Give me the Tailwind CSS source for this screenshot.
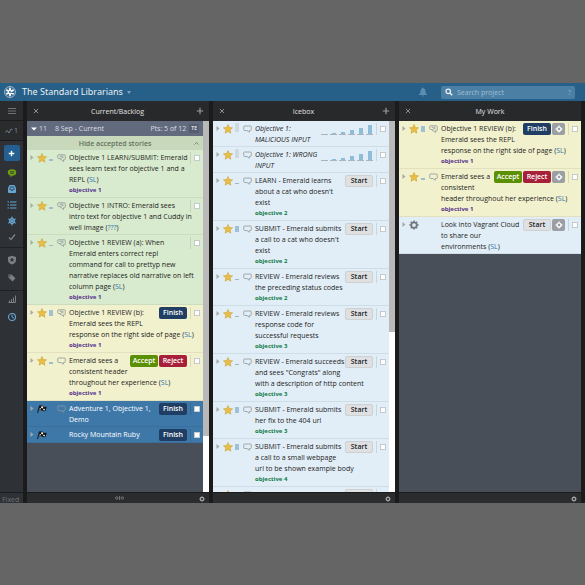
<!DOCTYPE html>
<html lang="en">
<head>
<meta charset="utf-8">
<meta name="viewport" content="width=device-width, initial-scale=1">
<title>The Standard Librarians</title>
<script src="https://cdn.jsdelivr.net/npm/@tailwindcss/browser@4"></script>
</head>
<body class="bg-[#666565] font-['Open_Sans','Noto_Sans',sans-serif] text-[7px] leading-[11px] text-[#1c1c1c]">
<svg class="hidden" aria-hidden="true">
  <symbol id="i-star" viewBox="0 0 20 20"><path d="M10 1l2.700 6 6.500.6-4.900 4.300 1.500 6.500L10 15l-5.800 3.400 1.500-6.500L.8 7.600 7.300 7z" fill="#e8bf45" stroke="#cda23a" stroke-width="1.200" stroke-linejoin="round"/></symbol>
  <symbol id="i-arrow" viewBox="0 0 8 10"><path d="M1 0l6 5-6 5z" fill="currentColor"/></symbol>
  <symbol id="i-comment" viewBox="0 0 18 16"><path d="M3 2h12q1.500 0 1.500 1.500v6q0 1.500-1.500 1.500h-2.500v3.500L8 11H3q-1.500 0-1.500-1.500v-6Q1.500 2 3 2z" fill="none" stroke="currentColor" stroke-width="1.600"/></symbol>
  <symbol id="i-comments" viewBox="0 0 18 16"><path d="M3 1.500h12q1.500 0 1.500 1.500v7q0 1.500-1.500 1.500h-2V15l-4-3.500H7V9H3Q1.500 9 1.500 7.500V3Q1.500 1.500 3 1.500zM5 4.500h8M8 7.500h5" fill="none" stroke="currentColor" stroke-width="1.600"/></symbol>
  <symbol id="i-gear" viewBox="0 0 20 20"><circle cx="10" cy="10" r="5.500" fill="none" stroke="currentColor" stroke-width="3.500"/><path d="M10 .8v3M10 16.200v3M.8 10h3M16.200 10h3M3.500 3.500l2 2M14.500 14.500l2 2M16.500 3.500l-2 2M5.500 14.500l-2 2" stroke="currentColor" stroke-width="3"/></symbol>
  <symbol id="i-flag" viewBox="0 0 20 18"><path d="M5 2.500Q9 0 12 3t7.500 1L17 13q-4 1.500-7-1t-7 0z" fill="#111"/><path d="M5 2L1 17" stroke="#111" stroke-width="1.800"/><path d="M9 3l3.500 1.500-.8 3.500-3.500-1.500zM13 8.500l3 .3-.8 3-3-.6zM5.500 7.500l2.300-.5-.8 2.800-2.300.5z" fill="#fff"/></symbol>
  <symbol id="i-plus" viewBox="0 0 10 10"><path d="M5 1v8M1 5h8" stroke="currentColor" stroke-width="1.500"/></symbol>
  <symbol id="i-x" viewBox="0 0 10 10"><path d="M1.500 1.500l7 7M8.500 1.500l-7 7" stroke="currentColor" stroke-width="1.500"/></symbol>
  <symbol id="i-move" viewBox="0 0 20 20"><circle cx="10" cy="10" r="5" fill="none" stroke="#fff" stroke-width="3"/><path d="M10 1v5M10 14v5M1 10h5M14 10h5" stroke="#fff" stroke-width="3"/></symbol>
</svg>

<div class="flex h-screen flex-col pt-[83px] pb-[82px]">
  <header class="flex h-[18px] shrink-0 items-center bg-[#265f88] pr-2.5 pl-1">
    <svg class="size-3 shrink-0" viewBox="0 0 24 24" aria-hidden="true"><circle cx="12" cy="12" r="11" fill="#3d7098" stroke="#b9cbd9" stroke-width="1.500"/><path d="M12 5v14M5.900 8.500l12.200 7M18.100 8.500l-12.200 7" stroke="#fff" stroke-width="3.600" stroke-linecap="round"/><circle cx="12" cy="12" r="2" fill="#265f88"/></svg>
    <h1 class="ml-1.5 font-['Noto_Sans',sans-serif] text-[9px] leading-[14px] whitespace-nowrap text-[#e9eff4]">The Standard Librarians</h1>
    <svg class="ml-1 h-[3px] w-1 shrink-0" viewBox="0 0 8 6" aria-hidden="true"><path d="M0 0h8L4 6z" fill="#7fa3be"/></svg>
    <svg class="mr-3.5 ml-auto h-2.5 w-2 shrink-0" viewBox="0 0 16 20" aria-hidden="true"><path d="M8 1q1.500 0 1.500 1.600Q13 4 13 8.500q0 5 3 6.500v1H0v-1q3-1.500 3-6.500Q3 4 6.500 2.600 6.500 1 8 1zM6 17h4q0 2-2 2t-2-2z" fill="#5d8dae"/></svg>
    <div class="flex h-[13px] w-[134px] items-center rounded-[2px] bg-[#4b7fa4] px-1">
      <svg class="size-2 shrink-0" viewBox="0 0 16 16" aria-hidden="true"><circle cx="6.500" cy="6.500" r="4.500" fill="none" stroke="#e6eef4" stroke-width="2.500"/><path d="M10 10l4.500 4.500" stroke="#e6eef4" stroke-width="3"/></svg>
      <input type="text" aria-label="Search project" placeholder="Search project" class="ml-1 h-3 min-w-0 flex-1 bg-transparent font-['Noto_Sans',sans-serif] text-[7px] text-white outline-none placeholder:text-[#9dbcd1]">
      <span class="text-[#8db0c8]">?</span>
    </div>
  </header>

  <div class="flex min-h-0 flex-1 bg-[#1b1b1c]">
    <nav class="flex w-[23px] shrink-0 flex-col items-center bg-[#2e3136] text-[#8b8e91]" aria-label="Tools">
      <button class="flex h-5 w-full items-center justify-center border-b border-[#1b1b1c] bg-[#2a2b2d]" aria-label="Menu"><svg class="h-1.5 w-2" viewBox="0 0 16 12"><path d="M0 1h16M0 6h16M0 11h16" stroke="#77797b" stroke-width="1.800"/></svg></button>
      <button class="flex h-5 w-full items-center justify-center gap-px border-b border-[#1b1b1c] bg-[#2a2b2d]" aria-label="Velocity"><svg class="h-1.5 w-2" viewBox="0 0 16 12"><path d="M1 9l3-4 4 5 4-8 3 1" fill="none" stroke="currentColor" stroke-width="1.600"/></svg>1</button>
      <button class="mt-1 flex size-4 items-center justify-center rounded-[2px] bg-[#235f91] text-white" aria-label="Add story"><svg class="size-[7px]" viewBox="0 0 10 10"><path d="M5 1v8M1 5h8" stroke="currentColor" stroke-width="2"/></svg></button>
      <div class="mt-1 flex w-full flex-col items-center border-b border-[#1f2124] text-[#68a7d4]">
        <button class="flex h-4 items-center" aria-label="Comments"><svg class="size-2.5" viewBox="0 0 20 20"><path d="M10 2.500q8.500 0 8.500 6.500T10 15.500L7 19l-.5-4Q1.500 13.500 1.500 9 1.500 2.500 10 2.500z" fill="#6d9f13"/><path d="M6 7.500h8M6 10.500h8" stroke="#2e3136" stroke-width="1.500"/></svg></button>
        <button class="flex h-4 items-center" aria-label="Inbox"><svg class="size-2.5" viewBox="0 0 20 20"><path d="M5 2h10l3 6v8q0 2-2 2H4q-2 0-2-2V8z" fill="currentColor"/><path d="M5.500 6h9M4 10h3.500l1.500 3h2l1.500-3H16" fill="none" stroke="#2e3136" stroke-width="1.800"/></svg></button>
        <button class="flex h-4 items-center" aria-label="List"><svg class="h-2 w-2.5" viewBox="0 0 20 16"><path d="M1 2h3M6 2h13M1 8h3M6 8h13M1 14h3M6 14h13" stroke="currentColor" stroke-width="2.400"/></svg></button>
        <button class="flex h-4 items-center" aria-label="Icebox"><svg class="size-2.5" viewBox="0 0 20 20"><path d="M10 2v16M3 6l14 8M17 6L3 14" stroke="currentColor" stroke-width="2" stroke-linecap="round"/><path d="M10 4.500l4.800 2.800v5.400L10 15.500l-4.800-2.800V7.300z" fill="none" stroke="currentColor" stroke-width="2.200"/></svg></button>
        <button class="mb-0.5 flex h-4 items-center text-[#7d7f82]" aria-label="Done"><svg class="h-2 w-2" viewBox="0 0 16 16"><path d="M2 9l4 4 8-10" fill="none" stroke="currentColor" stroke-width="2.800"/></svg></button>
      </div>
      <div class="flex w-full flex-col items-center gap-0.5 border-b border-[#1f2124] py-1 text-[#7d7f82]">
        <button class="flex h-4 items-center" aria-label="Epics"><svg class="size-2.5" viewBox="0 0 20 20"><path d="M10 1.500L18 4v6q0 6-8 9-8-3-8-9V4z" fill="currentColor"/><path d="M10 5l1.500 3h3l-2.300 2.200.8 3.300-3-1.700-3 1.700.8-3.300L5.500 8h3z" fill="#2e3136"/></svg></button>
        <button class="flex h-4 items-center" aria-label="Labels"><svg class="size-2" viewBox="0 0 16 16"><path d="M1 1h6l8 7.500L9 15 1 7z" fill="currentColor"/><circle cx="4" cy="4" r="1.300" fill="#2e3136"/></svg></button>
      </div>
      <div class="flex w-full flex-col items-center text-[#7d7f82]">
        <button class="flex h-4 items-center" aria-label="Charts"><svg class="size-2" viewBox="0 0 16 16"><path d="M1 15h14M3 15v-4M7 15V8M11 15V5M15 15V1" stroke="currentColor" stroke-width="2"/></svg></button>
        <button class="mt-0.5 flex h-4 items-center text-[#68a7d4]" aria-label="History"><svg class="size-2.5" viewBox="0 0 20 20"><circle cx="10" cy="10" r="7" fill="none" stroke="currentColor" stroke-width="2.200"/><path d="M10 5.500V10l4 2" fill="none" stroke="currentColor" stroke-width="2"/></svg></button>
      </div>
      <div class="mt-auto h-[11px] w-full overflow-hidden border-t border-[#1b1b1c] pl-0.5 leading-[14px] text-[#6f7174]">Fixed</div>
    </nav>
    <main id="board" class="flex min-w-0 flex-1 gap-1 pr-1 pl-1"></main>
  </div>
</div>

<script>
const SL = '(<a href="#" class="text-[#2d76b0]">SL</a>)';
const tones = {
  green: 'border-[#cbdcbf] bg-[#d9ebce] text-[#1c1c1c]',
  yellow: 'border-[#e2e0bd] bg-[#f2f1ce] text-[#1c1c1c]',
  ice: 'border-[#cfdde7] bg-[#e2eef7] text-[#1c1c1c]',
  done: 'border-[#3a6f9c] bg-[#3e78a9] text-white'
};
const buttons = {
  Finish: 'bg-[#203e64] text-white',
  Accept: 'bg-[#5b9004] text-white',
  Reject: 'bg-[#a71f39] text-white',
  Start: 'border border-[#cfd0d2] bg-[#dfe0e2] text-[#222]'
};
const points = {
  none: '',
  unset: '<span class="h-[9px] w-full bg-[#cfd9e1]"></span>',
  1: '<span class="h-[2px] w-full bg-[#9dbdcf]"></span>',
  0: '<span class="h-px w-full bg-[#a3b8ba]"></span>',
  3: '<span class="h-[6px] w-full bg-[#a0c0d8]"></span>'
};
const scale = ['h-0', 'h-px', 'h-[2px]', 'h-[4px]', 'h-[6px]', 'h-[9px]'];
const icon = (name, cls) => `<svg class="${cls}" aria-hidden="true"><use href="#i-${name}"/></svg>`;

function story(s) {
  const kind = s.kind || 'star';
  const acts = (s.acts || []).map(a => `<button aria-label="${a}" class="flex h-3 w-7 items-center justify-center rounded-[2px] font-semibold leading-[10px] ${buttons[a]}">${s.peek ? '' : a}</button>`).join('');
  const own = s.own ? `<button aria-label="Reveal story" class="flex h-3 w-[13px] items-center justify-center rounded-[2px] bg-[#9b9fa3]">${icon('move', 'size-2')}</button>` : '';
  const bars = s.scale ? `<div class="flex h-[11px] items-end gap-0.5" aria-hidden="true">${scale.map(h => `<span class="flex h-[10px] w-[7px] flex-col items-center justify-end border-b border-[#a9b4bc]"><span class="w-[4px] bg-[#8fbcd8] ${h}"></span></span>`).join('')}</div>` : '';
  return `<article class="flex border-b pt-0.5 pb-px ${tones[s.tone]}">
    <div class="flex h-[11px] w-[42px] shrink-0 items-center pl-[3px]">
      ${icon('arrow', 'h-[5px] w-1 shrink-0 text-[#a3aaa8]')}
      ${icon(kind, 'ml-[3px] size-2.5 shrink-0 text-[#73777b]')}
      <span class="ml-0.5 flex h-[7px] w-1 shrink-0 items-end">${points[s.pts ?? 'none']}</span>
      ${s.note ? icon(s.note, 'ml-1 h-2 w-[9px] shrink-0 text-[#8e989b]') : ''}
    </div>
    <div class="min-w-0 flex-1 whitespace-nowrap">
      <p class="${s.scale ? 'italic' : ''}">${s.text}</p>
      ${s.label ? `<a href="#" class="block text-[6px] font-bold ${s.tone === 'ice' ? 'text-[#107a45]' : 'text-[#54308a]'}">${s.label}</a>` : ''}
    </div>
    <div class="flex h-3 shrink-0 items-center gap-px pr-[3px]">${bars}${acts}${own}</div>
    <div class="flex h-3 w-[13px] shrink-0 items-center border-l border-black/10 pl-[3px]"><input type="checkbox" aria-label="Select story" class="size-1.5 appearance-none border border-[#c6c9cc] bg-white"></div>
  </article>`;
}

const review = { tone: 'yellow', pts: 3, note: 'comments', text: `Objective 1 REVIEW (b):<br>Emerald sees the REPL<br>response on the right side of page ${SL}`, label: 'objective 1', acts: ['Finish'] };
const columns = [
  { title: 'Current/Backlog', add: true, thumb: 'h-[85%]', foot: true, intro: `
      <div class="flex h-[15px] items-center bg-[#626a7d] px-1 text-[#dcdfe5]"><svg class="h-1 w-1.5" viewBox="0 0 12 8" aria-hidden="true"><path d="M0 1h12L6 7z" fill="#fff"/></svg><span class="ml-0.5">11</span><span class="ml-2">8 Sep - Current</span><span class="ml-auto">Pts: 5 of 12</span><button class="ml-[3px] h-[9px] rounded-[1px] bg-[#555d6f] px-0.5 text-[5px] leading-[9px] font-bold">TE</button></div>
      <button class="relative flex h-3.5 w-full items-center justify-center bg-[#c8d9bb] font-semibold text-[#62705b]">Hide accepted stories<svg class="absolute right-1 h-[3px] w-[5px]" viewBox="0 0 10 6" aria-hidden="true"><path d="M1 5l4-4 4 4" fill="none" stroke="#62705b" stroke-width="1.500"/></svg></button>`,
    stories: [
      { tone: 'green', pts: 1, note: 'comments', text: `Objective 1 LEARN/SUBMIT: Emerald<br>sees learn text for objective 1 and a<br>REPL ${SL}`, label: 'objective 1' },
      { tone: 'green', pts: 1, note: 'comments', text: 'Objective 1 INTRO: Emerald sees<br>intro text for objective 1 and Cuddy in<br>well image (<a href="#" class="text-[#2d76b0]">???</a>)' },
      { tone: 'green', pts: 0, note: 'comments', text: `Objective 1 REVIEW (a): When<br>Emerald enters correct repl<br>command for call to prettyp new<br>narrative replaces old narrative on left<br>column page ${SL}`, label: 'objective 1' },
      review,
      { tone: 'yellow', pts: 1, note: 'comment', text: `Emerald sees a<br>consistent header<br>throughout her experience ${SL}`, label: 'objective 1', acts: ['Accept', 'Reject'] },
      { tone: 'done', kind: 'flag', note: 'comment', text: 'Adventure 1, Objective 1,<br>Demo', acts: ['Finish'] },
      { tone: 'done', kind: 'flag', text: 'Rocky Mountain Ruby', acts: ['Finish'] }
    ] },
  { title: 'Icebox', add: true, thumb: 'h-[57%]', stories: [
      { pts: 'unset', scale: true, text: 'Objective 1:<br>MALICIOUS INPUT' },
      { pts: 'unset', scale: true, text: 'Objective 1: WRONG<br>INPUT' },
      { pts: 0, text: "LEARN - Emerald learns<br>about a cat who doesn't<br>exist", label: 'objective 2' },
      { pts: 3, text: "SUBMIT - Emerald submits<br>a call to a cat who doesn't<br>exist", label: 'objective 2' },
      { pts: 0, text: 'REVIEW - Emerald reviews<br>the preceding status codes', label: 'objective 2' },
      { pts: 0, text: 'REVIEW - Emerald reviews<br>response code for<br>successful requests', label: 'objective 3' },
      { pts: 0, text: 'REVIEW - Emerald succeeds<br>and sees "Congrats" along<br>with a description of http content', label: 'objective 3' },
      { pts: 3, text: 'SUBMIT - Emerald submits<br>her fix to the 404 url', label: 'objective 3' },
      { pts: 3, text: 'SUBMIT - Emerald submits<br>a call to a small webpage<br>url to be shown example body', label: 'objective 4' },
      { pts: 0, text: '', peek: true }
    ].map(s => ({ tone: 'ice', note: 'comment', acts: s.scale ? [] : ['Start'], ...s })) },
  { title: 'My Work', stories: [
      { ...review, own: true },
      { tone: 'yellow', pts: 1, note: 'comment', own: true, text: `Emerald sees a<br>consistent<br>header throughout her experience ${SL}`, label: 'objective 1', acts: ['Accept', 'Reject'] },
      { tone: 'ice', kind: 'gear', own: true, text: `Look into Vagrant Cloud<br>to share our<br>environments ${SL}`, acts: ['Start'] }
    ] }
];

document.getElementById('board').innerHTML = columns.map(c => `
  <section class="flex min-w-0 flex-1 flex-col">
    <div class="flex h-5 shrink-0 items-center bg-[#28292b] pr-[5px] pl-1.5 text-[#9a9b9d]">
      <button aria-label="Close panel">${icon('x', 'size-1.5')}</button>
      <h2 class="flex-1 text-center text-[#e2e2e2]">${c.title}</h2>
      ${c.add ? `<button aria-label="Add story">${icon('plus', 'size-2')}</button>` : '<span class="w-[7px]"></span>'}
    </div>
    <div class="flex min-h-0 flex-1 bg-[#484f58]">
      <div class="min-w-0 flex-1 overflow-hidden">${c.intro || ''}${c.stories.map(story).join('')}</div>
      ${c.thumb ? `<div class="w-1.5 shrink-0 bg-white" aria-hidden="true"><div class="bg-[#b9b9b9] ${c.thumb}"></div></div>` : ''}
    </div>
    <div class="flex h-[11px] shrink-0 items-center border-t border-[#1b1b1c] bg-[#2b2c2e] px-1 text-[#85878a]">
      <span class="flex flex-1 justify-center pl-2">${c.foot ? '<svg class="h-1 w-[9px]" viewBox="0 0 18 8" aria-hidden="true"><circle cx="3.500" cy="4" r="2.500" fill="none" stroke="currentColor" stroke-width="1.500"/><path d="M9 0v8" stroke="currentColor" stroke-width="1.500"/><circle cx="14.500" cy="4" r="2.500" fill="none" stroke="currentColor" stroke-width="1.500"/></svg>' : ''}</span>
      <button aria-label="Panel settings" class="pt-0.5 text-[#a5a7a9]">${icon('gear', 'size-1.5')}</button>
    </div>
  </section>`).join('');
</script>
</body>
</html>
